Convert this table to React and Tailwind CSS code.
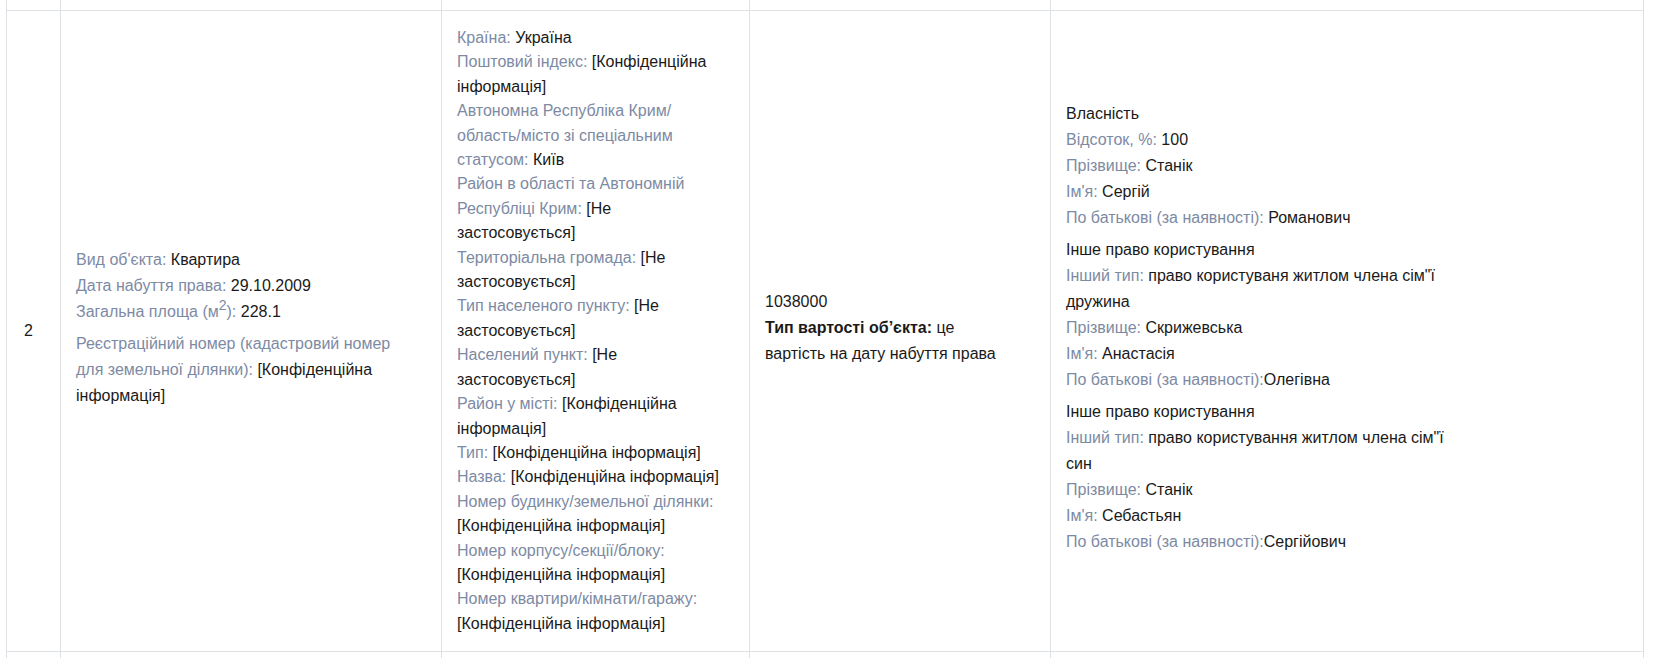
import React from "react";

const line = "border-[#dee2e6]";

const Label = ({ children }) => <span className="text-[#7d8aa4]">{children}</span>;

const Field = ({ label, value, nospace }) => (
  <div>
    <Label>
      {label}:{nospace ? "" : " "}
    </Label>
    {value}
  </div>
);

const addressFields = [
  ["Країна", "Україна"],
  ["Поштовий індекс", "[Конфіденційна інформація]"],
  ["Автономна Республіка Крим/ область/місто зі спеціальним статусом", "Київ"],
  ["Район в області та Автономній Республіці Крим", "[Не застосовується]"],
  ["Територіальна громада", "[Не застосовується]"],
  ["Тип населеного пункту", "[Не застосовується]"],
  ["Населений пункт", "[Не застосовується]"],
  ["Район у місті", "[Конфіденційна інформація]"],
  ["Тип", "[Конфіденційна інформація]"],
  ["Назва", "[Конфіденційна інформація]"],
  ["Номер будинку/земельної ділянки", "[Конфіденційна інформація]"],
  ["Номер корпусу/секції/блоку", "[Конфіденційна інформація]"],
  ["Номер квартири/кімнати/гаражу", "[Конфіденційна інформація]"],
];

const rights = [
  {
    title: "Власність",
    fields: [
      ["Відсоток, %", "100"],
      ["Прізвище", "Станік"],
      ["Ім'я", "Сергій"],
      ["По батькові (за наявності)", "Романович"],
    ],
  },
  {
    title: "Інше право користування",
    fields: [
      ["Інший тип", "право користуваня житлом члена сім\"ї дружина"],
      ["Прізвище", "Скрижевська"],
      ["Ім'я", "Анастасія"],
      ["По батькові (за наявності)", "Олегівна", true],
    ],
  },
  {
    title: "Інше право користування",
    fields: [
      ["Інший тип", "право користування житлом члена сім\"ї син"],
      ["Прізвище", "Станік"],
      ["Ім'я", "Себастьян"],
      ["По батькові (за наявності)", "Сергійович", true],
    ],
  },
];

const EmptyRow = ({ last }) => (
  <>
    {[0, 1, 2, 3, 4].map((i) => (
      <div key={i} className={`border-r ${line} ${last ? "h-[20px]" : "h-[11px] border-b"}`} />
    ))}
  </>
);

export default function App() {
  const cell = `border-r border-b ${line} flex flex-col justify-center`;

  return (
    <div className="h-[658px] w-[1663px] overflow-hidden bg-white font-['Liberation_Sans',Arial,sans-serif] text-[16px] text-[#1a1a1a]">
      <div className={`ml-[6px] grid grid-cols-[54px_381px_308px_301px_593px] border-l ${line}`}>
        <EmptyRow />

        <div className={`${cell} px-[17px] py-[15px] leading-[26px]`}>2</div>

        <div className={`${cell} px-[15px] pt-[15px] pb-[21px] leading-[26px]`}>
          <div className="max-w-[335px]">
            <Field label="Вид об'єкта" value="Квартира" />
            <Field label="Дата набуття права" value="29.10.2009" />
            <div>
              <Label>
                Загальна площа (м<span className="relative -top-[7px] text-[14px]">2</span>):{" "}
              </Label>
              228.1
            </div>
            <div className="mt-[6px]">
              <Field
                label="Реєстраційний номер (кадастровий номер для земельної ділянки)"
                value="[Конфіденційна інформація]"
              />
            </div>
          </div>
        </div>

        <div className={`${cell} px-[15px] py-[15px] leading-[24.4px]`}>
          <div className="max-w-[270px]">
            {addressFields.map(([l, v], i) => (
              <Field key={i} label={l} value={v} />
            ))}
          </div>
        </div>

        <div className={`${cell} px-[15px] pt-[15px] pb-[21px] leading-[26px]`}>
          <div className="max-w-[245px]">
            <div>1038000</div>
            <div>
              <span className="font-bold">Тип вартості об’єкта:</span> це вартість на дату набуття права
            </div>
          </div>
        </div>

        <div className={`${cell} px-[15px] pt-[15px] pb-[21px] leading-[26px]`}>
          <div className="flex max-w-[400px] flex-col gap-[6px]">
            {rights.map((r, i) => (
              <div key={i}>
                <div>{r.title}</div>
                {r.fields.map(([l, v, ns], j) => (
                  <Field key={j} label={l} value={v} nospace={ns} />
                ))}
              </div>
            ))}
          </div>
        </div>

        <EmptyRow last />
      </div>
    </div>
  );
}
